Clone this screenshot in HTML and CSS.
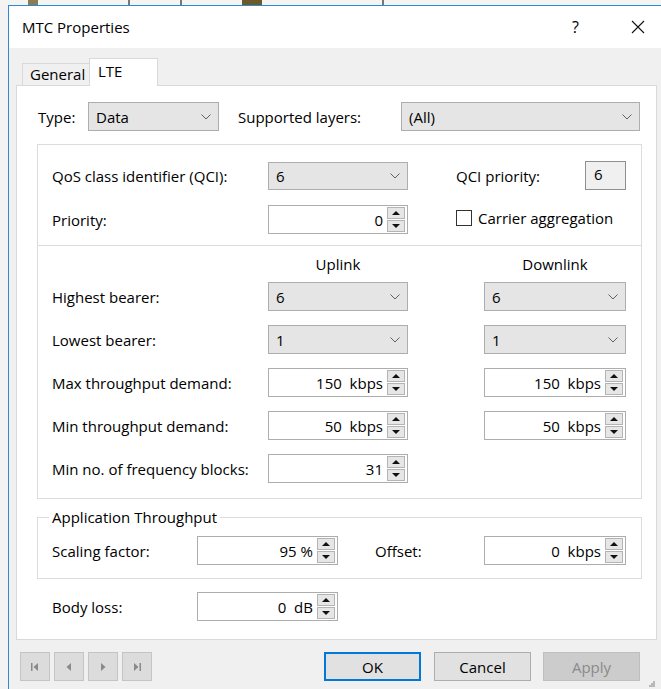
FILE: index.html
```html
<!DOCTYPE html>
<html lang="en">
<head>
<meta charset="utf-8">
<title>MTC Properties</title>
<link rel="stylesheet" href="styles.css">
</head>
<body>
<div class="desk-strip">
  <span class="mark m1"></span><span class="mark m2"></span><span class="mark m3"></span><span class="mark m4"></span><span class="mark m5"></span>
</div>
<div class="dialog">
  <div class="titlebar">
    <span class="title">MTC Properties</span>
    <span class="help">?</span>
    <svg class="close" width="14" height="14" viewBox="0 0 14 14"><path d="M1 1L13 13M13 1L1 13" stroke="#111" stroke-width="1.1" fill="none"/></svg>
  </div>

  <div class="dlg-body">
    <div class="tabs">
      <div class="tab">General</div>
      <div class="tab active">LTE</div>
    </div>

    <div class="panel">
      <div class="row type-row">
        <span class="lbl lbl-type">Type:</span>
        <div class="combo w-type"><span>Data</span><svg class="chev" width="10" height="6" viewBox="0 0 10 6"><path d="M0.5 0.5L5 5L9.5 0.5" stroke="#606060" fill="none"/></svg></div>
        <span class="lbl lbl-layers">Supported layers:</span>
        <div class="combo w-layers"><span>(All)</span><svg class="chev" width="10" height="6" viewBox="0 0 10 6"><path d="M0.5 0.5L5 5L9.5 0.5" stroke="#606060" fill="none"/></svg></div>
      </div>

      <div class="group">
        <div class="section qos">
          <div class="qos-row">
            <span class="lbl">QoS class identifier (QCI):</span>
            <div class="combo"><span>6</span><svg class="chev" width="10" height="6" viewBox="0 0 10 6"><path d="M0.5 0.5L5 5L9.5 0.5" stroke="#606060" fill="none"/></svg></div>
            <span class="lbl">QCI priority:</span>
            <div class="readonly">6</div>
          </div>
          <div class="qos-row">
            <span class="lbl">Priority:</span>
            <div class="spin"><span class="val">0</span><span class="arrows"><span class="up"></span><span class="down"></span></span></div>
            <label class="check"><span class="box"></span>Carrier aggregation</label>
          </div>
        </div>

        <div class="section bearers">
          <span class="head-gap"></span>
          <div class="col-head">Uplink</div>
          <div class="col-head">Downlink</div>

          <span class="lbl">Highest bearer:</span>
          <div class="combo"><span>6</span><svg class="chev" width="10" height="6" viewBox="0 0 10 6"><path d="M0.5 0.5L5 5L9.5 0.5" stroke="#606060" fill="none"/></svg></div>
          <div class="combo"><span>6</span><svg class="chev" width="10" height="6" viewBox="0 0 10 6"><path d="M0.5 0.5L5 5L9.5 0.5" stroke="#606060" fill="none"/></svg></div>

          <span class="lbl">Lowest bearer:</span>
          <div class="combo"><span>1</span><svg class="chev" width="10" height="6" viewBox="0 0 10 6"><path d="M0.5 0.5L5 5L9.5 0.5" stroke="#606060" fill="none"/></svg></div>
          <div class="combo"><span>1</span><svg class="chev" width="10" height="6" viewBox="0 0 10 6"><path d="M0.5 0.5L5 5L9.5 0.5" stroke="#606060" fill="none"/></svg></div>

          <span class="lbl">Max throughput demand:</span>
          <div class="spin"><span class="val">150&nbsp; kbps</span><span class="arrows"><span class="up"></span><span class="down"></span></span></div>
          <div class="spin"><span class="val">150&nbsp; kbps</span><span class="arrows"><span class="up"></span><span class="down"></span></span></div>

          <span class="lbl">Min throughput demand:</span>
          <div class="spin"><span class="val">50&nbsp; kbps</span><span class="arrows"><span class="up"></span><span class="down"></span></span></div>
          <div class="spin"><span class="val">50&nbsp; kbps</span><span class="arrows"><span class="up"></span><span class="down"></span></span></div>

          <span class="lbl">Min no. of frequency blocks:</span>
          <div class="spin"><span class="val">31</span><span class="arrows"><span class="up"></span><span class="down"></span></span></div>
        </div>
      </div>

      <fieldset class="app">
        <legend>Application Throughput</legend>
        <div class="app-row">
          <span class="lbl">Scaling factor:</span>
          <div class="spin"><span class="val">95 %</span><span class="arrows"><span class="up"></span><span class="down"></span></span></div>
          <span class="lbl">Offset:</span>
          <div class="spin"><span class="val">0&nbsp; kbps</span><span class="arrows"><span class="up"></span><span class="down"></span></span></div>
        </div>
      </fieldset>

      <div class="app-row body-loss">
        <span class="lbl">Body loss:</span>
        <div class="spin"><span class="val">0&nbsp; dB</span><span class="arrows"><span class="up"></span><span class="down"></span></span></div>
      </div>
    </div>

    <div class="footer">
      <div class="nav">
        <button class="navbtn" type="button"><svg width="10" height="10" viewBox="0 0 10 10"><rect x="1" y="1" width="1.5" height="8" fill="#8a8a8a"/><path d="M8 1L3.5 5L8 9Z" fill="#8a8a8a"/></svg></button>
        <button class="navbtn" type="button"><svg width="10" height="10" viewBox="0 0 10 10"><path d="M7 1L2.5 5L7 9Z" fill="#8a8a8a"/></svg></button>
        <button class="navbtn" type="button"><svg width="10" height="10" viewBox="0 0 10 10"><path d="M3 1L7.5 5L3 9Z" fill="#8a8a8a"/></svg></button>
        <button class="navbtn" type="button"><svg width="10" height="10" viewBox="0 0 10 10"><path d="M2 1L6.5 5L2 9Z" fill="#8a8a8a"/><rect x="7.5" y="1" width="1.5" height="8" fill="#8a8a8a"/></svg></button>
      </div>
      <button class="btn ok" type="button">OK</button>
      <button class="btn cancel" type="button">Cancel</button>
      <button class="btn apply" type="button" disabled>Apply</button>
      <svg class="grip" width="6" height="6" viewBox="0 0 6 6"><rect x="4" y="0" width="2" height="2" fill="#b8b8b8"/><rect x="2" y="2" width="2" height="2" fill="#b8b8b8"/><rect x="4" y="2" width="2" height="2" fill="#b8b8b8"/><rect x="0" y="4" width="2" height="2" fill="#b8b8b8"/><rect x="2" y="4" width="2" height="2" fill="#b8b8b8"/><rect x="4" y="4" width="2" height="2" fill="#b8b8b8"/></svg>
    </div>
  </div>
</div>
</body>
</html>
```

FILE: styles.css
```css
* { box-sizing: border-box; }

html, body {
  margin: 0;
  padding: 0;
  width: 661px;
  height: 689px;
  overflow: hidden;
  background: #f3f3f3;
  font-family: "Open Sans", "Noto Sans", sans-serif;
  font-size: 15px;
  color: #000;
}

/* strip of the desktop visible above the window */
.desk-strip {
  height: 5px;
  background: #f4f4f2;
  display: flex;
}
.mark { display: block; height: 5px; }
.m1 { width: 10px; margin-left: 28px; background: #8a7d52; }
.m2 { width: 2px; margin-left: 90px; background: #777; }
.m3 { width: 2px; margin-left: 50px; background: #777; }
.m4 { width: 20px; margin-left: 60px; background: #6b5a2a; }
.m5 { width: 2px; margin-left: 120px; background: #777; }

.dialog {
  margin-left: 8px;
  width: 653px;
  height: 684px;
  border-top: 1px solid #2a8ad8;
  border-left: 1px solid #2a8ad8;
  background: #f0f0f0;
  display: flex;
  flex-direction: column;
}

.titlebar {
  height: 42px;
  flex: none;
  background: #fff;
  display: flex;
  align-items: center;
  padding-left: 13px;
}
.title { font-size: 15px; }
.help { margin-left: auto; font-size: 16px; margin-right: 52px; }
.close { margin-right: 16px; }

.dlg-body {
  flex: 1;
  padding: 10px 4px 0 7px;
  display: flex;
  flex-direction: column;
}

.tabs {
  display: flex;
  align-items: flex-end;
  height: 27px;
  margin-left: 6px;
  position: relative;
  z-index: 1;
}
.tab {
  width: 68px;
  height: 22px;
  padding: 0 0 0 7px;
  border: 1px solid #d9d9d9;
  border-bottom: none;
  background: #f0f0f0;
  line-height: 21px;
}
.tab.active {
  height: 28px;
  margin-bottom: -1px;
  margin-left: -1px;
  width: 69px;
  padding: 0 0 0 8px;
  background: #fff;
  line-height: 24px;
}

.panel {
  width: 641px;
  background: #fff;
  border: 1px solid #d9d9d9;
  padding: 16px 14px 18px 20px;
}

.lbl { white-space: nowrap; }

.row { display: flex; align-items: center; }
.type-row { height: 29px; }
.lbl-type { width: 51px; padding-left: 1px; }
.lbl-layers { width: 163px; margin-left: 19px; }

/* drop-down */
.combo {
  height: 28px;
  background: #e5e5e5;
  border: 1px solid #adadad;
  display: flex;
  align-items: center;
  padding: 0 7px 0 7px;
}
.combo .chev { margin-left: auto; }
.w-type { width: 131px; height: 29px; }
.w-layers { width: 239px; height: 29px; }

/* numeric up/down */
.spin {
  height: 29px;
  background: #fff;
  border: 1px solid #adadad;
  display: flex;
  align-items: center;
  padding: 0 2px 0 6px;
}
.spin .val { margin-left: auto; margin-right: 4px; white-space: nowrap; }
.arrows {
  display: flex;
  flex-direction: column;
  gap: 1px;
  width: 18px;
}
.arrows .up, .arrows .down {
  display: block;
  height: 12px;
  background: #e6e6e6;
  border: 1px solid #b4b4b4;
  position: relative;
}
.arrows .up::after, .arrows .down::after {
  content: "";
  position: absolute;
  left: 4px;
  border-left: 4px solid transparent;
  border-right: 4px solid transparent;
}
.arrows .up::after { top: 3px; border-bottom: 4px solid #111; }
.arrows .down::after { top: 3px; border-top: 4px solid #111; }

.group {
  margin-top: 13px;
  border: 1px solid #dcdcdc;
}
.section { padding-left: 14px; }
.qos {
  padding-top: 17px;
  padding-bottom: 12px;
  border-bottom: 1px solid #dcdcdc;
  display: flex;
  flex-direction: column;
  gap: 15px;
}
.qos-row {
  display: grid;
  grid-template-columns: 216px 140px 48px 129px 41px;
  height: 28px;
  align-items: center;
}
.qos-row > :nth-child(3) { grid-column: 4; }
.qos-row .check { grid-column: 4 / span 2; }

.readonly {
  height: 29px;
  margin-top: -2px;
  background: #f0f0f0;
  border: 1px solid #8f8f8f;
  padding: 2px 0 0 8px;
  line-height: 20px;
}

.check { display: flex; align-items: center; white-space: nowrap; margin-top: -3px; }
.check .box {
  width: 16px;
  height: 16px;
  border: 1px solid #333;
  background: #fff;
  margin-right: 6px;
}

/* uplink / downlink bearer grid */
.bearers {
  padding-top: 10px;
  padding-bottom: 15px;
  display: grid;
  grid-template-columns: 216px 140px 76px 142px;
  grid-template-rows: 12px repeat(5, 29px);
  row-gap: 14px;
  align-items: center;
}
.bearers .combo, .bearers .spin { height: 29px; }
.bearers > .lbl + div + div,
.bearers > .col-head + .col-head { grid-column: 4; }
.col-head {
  align-self: start;
  line-height: 16px;
  text-align: center;
}

/* application throughput group */
.app {
  margin: 9px 0 0;
  padding: 10px 14px 13px;
  border: 1px solid #dcdcdc;
  min-width: 0;
}
.app legend {
  padding: 0 3px;
  margin-left: -3px;
  line-height: 18px;
}
.app-row {
  display: grid;
  grid-template-columns: 145px 141px 37px 109px 142px;
  height: 29px;
  align-items: center;
}
.app-row > :nth-child(3) { grid-column: 4; }
.body-loss {
  margin-top: 13px;
  padding-left: 15px;
}

.footer {
  display: flex;
  margin-top: 12px;
  padding-left: 4px;
  position: relative;
  flex: 1;
  align-items: flex-start;
}
.nav { display: flex; gap: 4px; }
.navbtn {
  width: 30px;
  height: 29px;
  border: 1px solid #c4c4c4;
  background: #dcdcdc;
  display: flex;
  align-items: center;
  justify-content: center;
  padding: 0;
}
.btn {
  width: 97px;
  height: 29px;
  border: 1px solid #adadad;
  background: #e1e1e1;
  font-family: inherit;
  font-size: 15px;
  color: #000;
  padding: 0;
}
.ok { margin-left: auto; border: 2px solid #0078d7; }
.cancel { margin-left: 13px; }
.apply { margin-left: 12px; margin-right: 17px; background: #cccccc; border-color: #bfbfbf; color: #8a8a8a; }
.grip { position: absolute; right: 2px; bottom: 2px; }
```
